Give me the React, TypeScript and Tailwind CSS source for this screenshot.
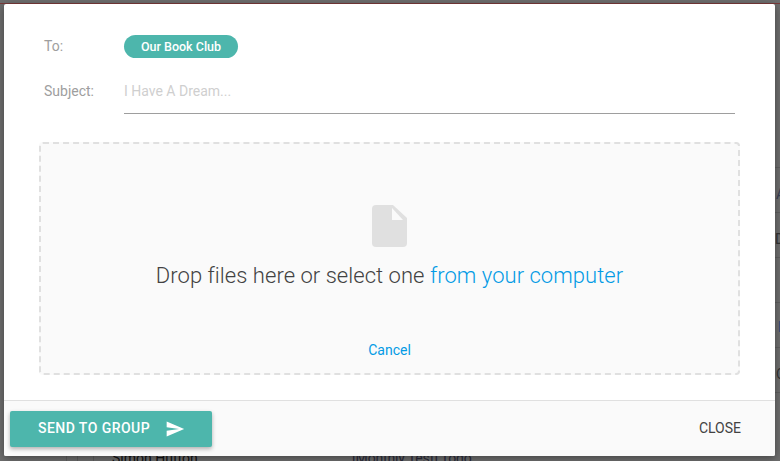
// Dimmed page behind the dialog: only its edges show
const rowLines = [167, 212, 257, 302, 347, 392];
const columnLines = [66, 77, 93];

function Backdrop() {
    return (
        <div className="absolute inset-0 bg-[#6e6e6e] font-['Roboto',sans-serif]">
            <div className="absolute left-0 right-0 top-[3px] h-px bg-[#7a3a3a]" />
            {rowLines.map((y) => (
                <div key={y} className="absolute left-[775px] w-[5px] h-px bg-[#5f5f5f]" style={{ top: y }} />
            ))}
            {columnLines.map((x) => (
                <div key={x} className="absolute top-[456px] w-px h-[5px] bg-[#5f5f5f]" style={{ left: x }} />
            ))}
            <span className="absolute left-[776px] top-[186px] text-[14px] leading-4 text-[#3a3f55]">A</span>
            <span className="absolute left-[775px] top-[231px] text-[14px] leading-4 text-[#333]">D</span>
            <span className="absolute left-[778px] top-[319px] text-[14px] leading-4 text-[#2a4a7a]">l</span>
            <span className="absolute left-[776px] top-[366px] text-[14px] leading-4 text-[#333]">C</span>
            <span className="absolute left-[112px] top-[450px] text-[14px] leading-4 text-[#111]">Simon Hutton</span>
            <span className="absolute left-[352px] top-[450px] text-[14px] tracking-[-0.15px] leading-4 text-[#2a2a3a]">
                [Monthly Test] Todo
            </span>
        </div>
    );
}

export default function App() {
    return (
        <div className="relative w-[780px] h-[461px] overflow-hidden font-['Roboto',sans-serif]">
            <Backdrop />
            <div className="relative mt-1 ml-1 w-[771px] h-[452px] bg-white rounded-[2px] shadow-[0_2px_8px_rgba(0,0,0,0.4)] flex flex-col">
                <div className="flex-1 flex flex-col px-[35px] pt-[31px]">
                    <div className="flex items-center h-[23px] pl-[5px]">
                        <span className="w-20 text-[14px] text-[#9e9e9e]">To:</span>
                        <span className="h-[23px] w-[114px] text-center rounded-full bg-[#4db6ac] text-white text-[12.5px] font-medium leading-[23px]">
                            Our Book Club
                        </span>
                    </div>
                    <div className="flex mx-[5px] mt-[11px] h-[45px]">
                        <span className="w-20 text-[14px] leading-[44px] text-[#9e9e9e]">Subject:</span>
                        <div className="flex-1 border-b border-[#9e9e9e] text-[14px] leading-[44px] text-[#cfcfcf]">
                            I Have A Dream...
                        </div>
                    </div>
                    <div className="mt-7 h-[233px] flex flex-col items-center border-2 border-dashed border-[#e0e0e0] rounded bg-[#fafafa]">
                        <svg className="mt-[61px]" width="35" height="42" viewBox="0 0 35 42">
                            <path
                                d="M4 0H21L35 13V38a4 4 0 0 1-4 4H4a4 4 0 0 1-4-4V4a4 4 0 0 1 4-4Z"
                                fill="#e0e0e0"
                            />
                            <path d="M20 3L31 15H20Z" fill="#fafafa" />
                        </svg>
                        <p className="mt-[15px] text-[22px] font-light tracking-[0.04px] leading-7 text-[#424242]">
                            Drop files here or select one <span className="text-[#039be5]">from your computer</span>
                        </p>
                        <span className="mt-[50px] text-[14px] leading-5 text-[#039be5]">Cancel</span>
                    </div>
                </div>
                <div className="h-[56px] flex items-center justify-between pl-1.5 pr-[34px] border-t border-[#e0e0e0] bg-[#fafafa] rounded-b-[2px]">
                    <button className="w-[202px] h-9 flex items-center pl-7 rounded-[2px] bg-[#4db6ac] text-white text-[14px] font-medium tracking-[0.45px] shadow-[0_2px_4px_rgba(0,0,0,0.3)]">
                        SEND TO GROUP
                        <svg className="ml-[15px]" width="20" height="20" viewBox="0 0 24 24" fill="white">
                            <path d="M2.01 21L23 12 2.01 3 2 10l15 2-15 2z" />
                        </svg>
                    </button>
                    <span className="text-[14px] text-[#424242]">CLOSE</span>
                </div>
            </div>
        </div>
    );
}
